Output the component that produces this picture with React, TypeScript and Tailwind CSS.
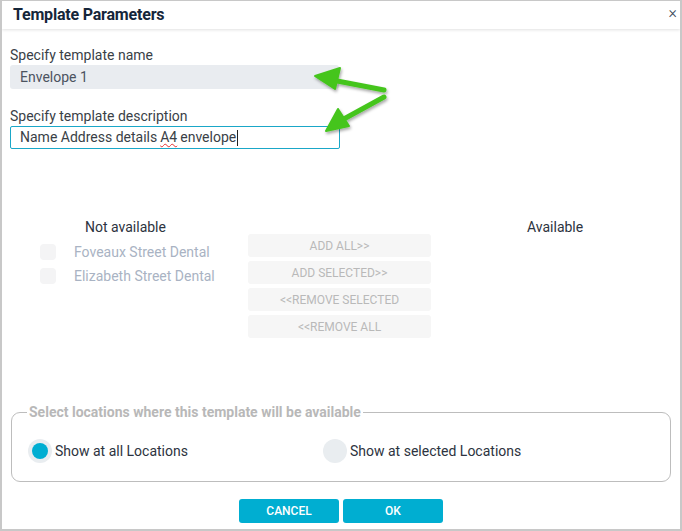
import React from 'react';

const font = { fontFamily: 'Roboto, "Liberation Sans", sans-serif' };

function Arrows() {
  return (
    <svg className="absolute left-0 top-0 pointer-events-none" width="682" height="531">
      <defs>
        <filter id="sh" x="-20%" y="-20%" width="140%" height="140%">
          <feDropShadow dx="1" dy="2" stdDeviation="1.5" floodColor="#000" floodOpacity="0.35" />
        </filter>
      </defs>
      <g filter="url(#sh)" fill="#45c51f" stroke="#45c51f" strokeLinecap="round" strokeLinejoin="round">
        <line x1="382" y1="89" x2="330" y2="79" strokeWidth="5" />
        <polygon points="313,75 338,67 333,88" strokeWidth="2" />
        <line x1="382" y1="96" x2="340" y2="119" strokeWidth="5" />
        <polygon points="324,130 336,108 347,125" strokeWidth="2" />
      </g>
    </svg>
  );
}

export default function App() {
  const locations = ['Foveaux Street Dental', 'Elizabeth Street Dental'];
  const moves = ['ADD ALL>>', 'ADD SELECTED>>', '<<REMOVE SELECTED', '<<REMOVE ALL'];

  return (
    <div
      className="relative w-[682px] h-[531px] bg-white border-t border-x-2 border-b-2 border-[#c8c8c8] overflow-hidden flex flex-col"
      style={font}
    >
      <header className="h-[28px] shrink-0 flex items-center justify-between pl-[11px] pr-[3px] shadow-[0_1px_3px_rgba(0,0,0,0.12)]">
        <h1 className="text-[16px] font-bold text-[#15263a] tracking-[-0.2px]">Template Parameters</h1>
        <span className="text-[16px] font-light leading-none text-[#3d4a5a] -mt-[4px]">×</span>
      </header>

      <main className="flex-1 flex flex-col px-[8px]">
        <label className="mt-[17px] text-[14px] leading-[18px] text-[#3a3f47]">Specify template name</label>
        <div className="mt-[1px] w-[329px] h-[24px] rounded-[3px] bg-[#e9ecf0] flex items-center pl-[10px] text-[14px] text-[#4c5360]">
          Envelope 1
        </div>

        <label className="mt-[18px] text-[14px] leading-[18px] text-[#3a3f47]">Specify template description</label>
        <div className="mt-[1px] w-[330px] h-[23px] rounded-[2px] border border-[#1aa7c8] flex items-center pl-[9px] text-[14px] text-[#3a3f47]">
          <span>Name Address details </span>
          <span className="ml-[3px] underline decoration-wavy decoration-[#e33333] decoration-1 underline-offset-[1px]">A4</span>
          <span className="ml-[3px]">envelope</span>
          <span className="ml-[1px] w-[1px] h-[16px] bg-[#222]" />
        </div>

        <section className="mt-[69px] flex">
          <div className="w-[240px] flex flex-col">
            <div className="pl-[75px] text-[14px] leading-[18px] text-[#2d3340]">Not available</div>
            <div className="mt-[8px] flex flex-col gap-[8px] pl-[30px]">
              {locations.map((l) => (
                <div key={l} className="flex items-center h-[16px]">
                  <span className="w-[16px] h-[16px] rounded-[4px] bg-[#f4f4f5]" />
                  <span className="ml-[18px] text-[14px] text-[#a9b3c3]">{l}</span>
                </div>
              ))}
            </div>
          </div>
          <div className="mt-[16px] -ml-[2px] w-[183px] flex flex-col gap-[4px]">
            {moves.map((m) => (
              <div
                key={m}
                className="h-[23px] rounded-[3px] bg-[#f6f6f6] flex items-center justify-center text-[12px] text-[#b9b9b9]"
              >
                {m}
              </div>
            ))}
          </div>
          <div className="flex-1 pl-[96px] text-[14px] leading-[18px] text-[#2d3340]">Available</div>
        </section>

        <fieldset className="mt-[66px] mx-[1px] h-[78px] border border-[#bdbdbd] rounded-[9px] px-[16px]">
          <legend className="px-[2px] -ml-[1px] text-[14px] font-bold text-[#b8b8b8] leading-[16px]">
            Select locations where this template will be available
          </legend>
          <div className="mt-[19px] flex items-center">
            <div className="w-[295px] flex items-center">
              <span className="w-[24px] h-[24px] rounded-full bg-[#e9edf0] flex items-center justify-center">
                <span className="w-[16px] h-[16px] rounded-full bg-[#00aed2]" />
              </span>
              <span className="ml-[3px] text-[14px] text-[#2d3340]">Show at all Locations</span>
            </div>
            <div className="flex items-center">
              <span className="w-[24px] h-[24px] rounded-full bg-[#e9edf0]" />
              <span className="ml-[3px] text-[14px] text-[#2d3340]">Show at selected Locations</span>
            </div>
          </div>
        </fieldset>

        <div className="mt-[17px] flex justify-center gap-[4px]">
          <button className="w-[100px] h-[24px] rounded-[3px] bg-[#00aed1] text-white text-[12px] font-medium">CANCEL</button>
          <button className="w-[100px] h-[24px] rounded-[3px] bg-[#00aed1] text-white text-[12px] font-medium">OK</button>
        </div>
      </main>

      <Arrows />
    </div>
  );
}
